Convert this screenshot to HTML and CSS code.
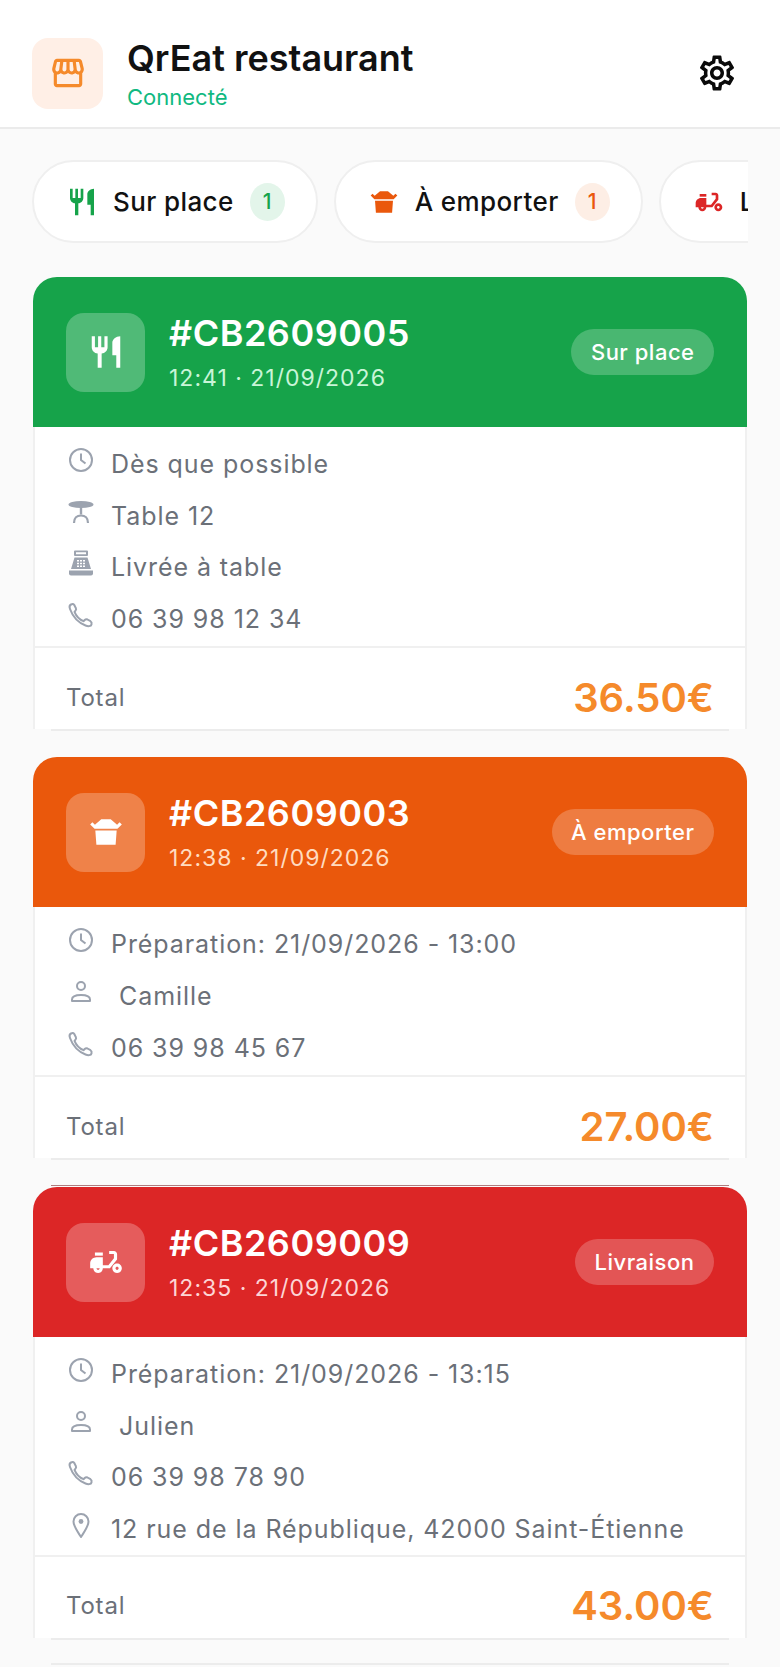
FILE: index.html
```html
<!DOCTYPE html>
<html lang="fr">
<head>
	<meta charset="UTF-8">
	<meta name="viewport" content="width=device-width, initial-scale=1.0">
	<title>QrEat restaurant</title>
	<link rel="stylesheet" href="styles.css">
</head>
<body>

	<svg class="defs" aria-hidden="true">
		<symbol id="i-fork" viewBox="0 0 24 24"><path d="M11 9H9V2H7v7H5V2H3v7c0 2.12 1.66 3.84 3.75 3.97V22h2.5v-9.03C11.34 12.84 13 11.12 13 9V2h-2v7zm5-3v8h2.5v8H21V2c-2.76 0-5 2.24-5 4z"/></symbol>
		<symbol id="i-box" viewBox="0 0 24 24"><path d="M5.26 11h13.48l-.67 9H5.93l-.67-9zm3.76-7h5.95L19 7.38l1.59-1.59L22 7.21 19.21 10H4.79L2 7.21 3.41 5.8 5 7.38 9.02 4z"/></symbol>
		<symbol id="i-moped" viewBox="0 0 24 24"><path d="M19 7c0-1.1-.9-2-2-2h-3v2h3v2.65L13.52 14H10V9H6c-2.21 0-4 1.79-4 4v3h2c0 1.66 1.34 3 3 3s3-1.34 3-3h4.48L19 10.35V7zM7 17c-.55 0-1-.45-1-1h2c0 .55-.45 1-1 1z"/><path d="M5 6h5v2H5z"/><path d="M19 13c-1.66 0-3 1.34-3 3s1.34 3 3 3 3-1.34 3-3-1.34-3-3-3zm0 4c-.55 0-1-.45-1-1s.45-1 1-1 1 .45 1 1-.45 1-1 1z"/></symbol>
		<symbol id="i-clock" viewBox="0 0 28 28"><circle cx="14" cy="14" r="11" fill="none" stroke="currentColor" stroke-width="2"/><path d="M14 7.5V14l4.5 3.5" fill="none" stroke="currentColor" stroke-width="2"/></symbol>
		<symbol id="i-table" viewBox="0 0 28 28"><ellipse cx="14" cy="6.5" rx="12.5" ry="3.6"/><path d="M12.8 9h2.4v7.5h-2.4z"/><path d="M7 25c0-5 3-7.5 7-7.5s7 2.500 7 7.500" fill="none" stroke="currentColor" stroke-width="2.200"/></symbol>
		<symbol id="i-till" viewBox="0 0 28 28"><path d="M8 1.500h12a1 1 0 0 1 1 1v3.500a1 1 0 0 1-1 1H8a1 1 0 0 1-1-1V2.500a1 1 0 0 1 1-1zm1 1.800v2h10v-2z" fill-rule="evenodd"/><path d="M7.500 8.500h13l3.500 11.500H4zM10 11v1.500h2V11zm3 0v1.500h2V11zm3 0v1.500h2V11zm-6 2.700v1.500h2v-1.500zm3 0v1.500h2v-1.500zm3 0v1.500h2v-1.500zm-6 2.700v1.500h2v-1.500zm3 0v1.500h2v-1.500zm3 0v1.500h2v-1.500z" fill-rule="evenodd"/><path d="M2 21.500h24v3a2 2 0 0 1-2 2H4a2 2 0 0 1-2-2z"/></symbol>
		<symbol id="i-phone" viewBox="0 0 28 28"><path d="M4 3.500c-1.500.8-1.800 2.500-1 4.500 2.500 7 8 13.500 15.500 16.500 2.500 1 5.500 1 6-1 .4-1.500 0-2.600-1-3.300l-3-1.700c-1-.5-2-.3-2.800.5l-1.200 1.200C12.500 18.500 9 14.500 7.500 10.800l1-1.100c.7-.8.800-1.700.3-2.600L7.300 4c-.7-1-2-1.200-3.300-.5z" fill="none" stroke="currentColor" stroke-width="2" stroke-linejoin="round"/></symbol>
		<symbol id="i-user" viewBox="0 0 28 28"><circle cx="14" cy="8" r="4" fill="none" stroke="currentColor" stroke-width="2"/><path d="M5 23v-1.500c0-3 4-4.500 9-4.500s9 1.500 9 4.500V23z" fill="none" stroke="currentColor" stroke-width="2" stroke-linejoin="round"/></symbol>
		<symbol id="i-pin" viewBox="0 0 28 28"><path d="M14 26C9.500 19 6.500 15 6.500 10.500a7.500 7.500 0 0 1 15 0C21.500 15 18.500 19 14 26z" fill="none" stroke="currentColor" stroke-width="2" stroke-linejoin="round"/><circle cx="14" cy="10.500" r="2.400"/></symbol>
	</svg>

	<header class="topbar">
		<div class="logo">
			<svg class="logo-icon" viewBox="0 0 24 24"><path d="M21.900 8.890l-1.050-4.370c-.22-.9-1-1.520-1.910-1.520H5.050c-.9 0-1.690.63-1.900 1.520L2.100 8.890c-.24 1.020-.02 2.060.62 2.880.08.11.19.19.28.29V19c0 1.100.9 2 2 2h14c1.100 0 2-.9 2-2v-6.940c.09-.09.2-.18.28-.28.64-.82.87-1.870.62-2.890zm-2.990-3.900l1.050 4.370c.1.420.01.84-.25 1.170-.14.18-.44.47-.94.47-.61 0-1.140-.49-1.210-1.140L16.980 5l1.930-.01zM13 5h1.960l.54 4.520c.05.39-.07.78-.33 1.070-.22.26-.54.41-.95.41-.67 0-1.220-.59-1.220-1.310V5zM8.490 9.520L9.040 5H11v4.690c0 .72-.55 1.310-1.290 1.310-.34 0-.65-.15-.89-.41-.25-.29-.37-.68-.33-1.070zm-4.450-.16L5.050 5h1.970l-.58 4.860c-.08.65-.6 1.140-1.210 1.140-.49 0-.8-.29-.93-.47-.27-.32-.36-.75-.26-1.170zM5 19v-6.030c.08.01.15.03.23.03.87 0 1.660-.36 2.240-.95.6.6 1.400.95 2.310.95.87 0 1.650-.36 2.230-.93.59.57 1.390.93 2.290.93.84 0 1.640-.35 2.240-.95.58.59 1.370.95 2.240.95.08 0 .15-.02.23-.03V19H5z"/></svg>
		</div>
		<div class="brand">
			<div class="brand-name">QrEat restaurant</div>
			<div class="brand-status">Connecté</div>
		</div>
		<svg class="gear" viewBox="0 0 24 24"><path d="M19.430 12.980c.04-.32.07-.64.07-.98 0-.34-.03-.66-.07-.98l2.110-1.650c.19-.15.24-.42.12-.64l-2-3.460c-.09-.16-.26-.25-.44-.25-.06 0-.12.01-.17.03l-2.490 1c-.52-.4-1.080-.73-1.690-.98l-.38-2.650C14.460 2.180 14.250 2 14 2h-4c-.25 0-.46.18-.49.42l-.38 2.650c-.61.25-1.170.59-1.690.98l-2.490-1c-.06-.02-.12-.03-.18-.03-.17 0-.34.09-.43.25l-2 3.460c-.13.22-.07.49.12.64l2.110 1.650c-.04.32-.07.65-.07.98 0 .33.03.66.07.98l-2.110 1.650c-.19.15-.24.42-.12.64l2 3.460c.09.16.26.25.44.25.06 0 .12-.01.17-.03l2.490-1c.52.4 1.080.73 1.690.98l.38 2.650c.03.24.24.42.49.42h4c.25 0 .46-.18.49-.42l.38-2.650c.61-.25 1.170-.59 1.690-.98l2.490 1c.06.02.12.03.18.03.17 0 .34-.09.43-.25l2-3.460c.12-.22.07-.49-.12-.64l-2.110-1.650zm-1.980-1.710c.04.31.05.52.05.73 0 .21-.02.43-.05.73l-.14 1.130.89.7 1.080.84-.7 1.210-1.270-.51-1.040-.42-.9.68c-.43.32-.84.56-1.250.73l-1.060.43-.16 1.130-.2 1.350h-1.400l-.19-1.350-.16-1.130-1.060-.43c-.43-.18-.83-.41-1.230-.71l-.91-.7-1.060.43-1.270.51-.7-1.210 1.080-.84.89-.7-.14-1.130c-.03-.31-.05-.54-.05-.74s.02-.43.05-.73l.14-1.130-.89-.7-1.080-.84.7-1.210 1.270.51 1.040.42.9-.68c.43-.32.84-.56 1.250-.73l1.060-.43.16-1.130.2-1.350h1.390l.19 1.350.16 1.130 1.060.43c.43.18.83.41 1.230.71l.91.7 1.060-.43 1.270-.51.7 1.210-1.070.85-.89.7.14 1.130zM12 8c-2.210 0-4 1.790-4 4s1.790 4 4 4 4-1.790 4-4-1.790-4-4-4zm0 6c-1.100 0-2-.9-2-2s.9-2 2-2 2 .9 2 2-.9 2-2 2z"/></svg>
	</header>

	<nav class="tabs">
		<div class="tab tab-green">
			<svg class="tab-icon"><use href="#i-fork"/></svg>
			<span class="tab-label">Sur place</span>
			<span class="tab-count">1</span>
		</div>
		<div class="tab tab-orange">
			<svg class="tab-icon"><use href="#i-box"/></svg>
			<span class="tab-label">À emporter</span>
			<span class="tab-count">1</span>
		</div>
		<div class="tab tab-red">
			<svg class="tab-icon"><use href="#i-moped"/></svg>
			<span class="tab-label">Livraison</span>
			<span class="tab-count">1</span>
		</div>
	</nav>

	<main class="orders">

		<article class="card card-green">
			<div class="card-head">
				<div class="type-icon"><svg><use href="#i-fork"/></svg></div>
				<div class="card-title">
					<div class="order-no">#CB2609005</div>
					<div class="order-time">12:41 · 21/09/2026</div>
				</div>
				<span class="type-badge">Sur place</span>
			</div>
			<div class="card-body">
				<div class="row"><svg class="row-icon"><use href="#i-clock"/></svg><span>Dès que possible</span></div>
				<div class="row"><svg class="row-icon"><use href="#i-table"/></svg><span>Table 12</span></div>
				<div class="row"><svg class="row-icon"><use href="#i-till"/></svg><span>Livrée à table</span></div>
				<div class="row"><svg class="row-icon"><use href="#i-phone"/></svg><span>06 39 98 12 34</span></div>
			</div>
			<div class="card-foot">
				<span class="total-label">Total</span>
				<span class="total-value">36.50€</span>
			</div>
			<div class="card-edge"></div>
		</article>

		<article class="card card-orange">
			<div class="card-head">
				<div class="type-icon"><svg><use href="#i-box"/></svg></div>
				<div class="card-title">
					<div class="order-no">#CB2609003</div>
					<div class="order-time">12:38 · 21/09/2026</div>
				</div>
				<span class="type-badge">À emporter</span>
			</div>
			<div class="card-body">
				<div class="row"><svg class="row-icon"><use href="#i-clock"/></svg><span>Préparation: 21/09/2026 - 13:00</span></div>
				<div class="row"><svg class="row-icon"><use href="#i-user"/></svg><span class="name">Camille</span></div>
				<div class="row"><svg class="row-icon"><use href="#i-phone"/></svg><span>06 39 98 45 67</span></div>
			</div>
			<div class="card-foot">
				<span class="total-label">Total</span>
				<span class="total-value">27.00€</span>
			</div>
			<div class="card-edge"></div>
		</article>

		<article class="card card-red">
			<div class="card-edge edge-dark"></div>
			<div class="card-head">
				<div class="type-icon"><svg><use href="#i-moped"/></svg></div>
				<div class="card-title">
					<div class="order-no">#CB2609009</div>
					<div class="order-time">12:35 · 21/09/2026</div>
				</div>
				<span class="type-badge">Livraison</span>
			</div>
			<div class="card-body">
				<div class="row"><svg class="row-icon"><use href="#i-clock"/></svg><span>Préparation: 21/09/2026 - 13:15</span></div>
				<div class="row"><svg class="row-icon"><use href="#i-user"/></svg><span class="name">Julien</span></div>
				<div class="row"><svg class="row-icon"><use href="#i-phone"/></svg><span>06 39 98 78 90</span></div>
				<div class="row"><svg class="row-icon"><use href="#i-pin"/></svg><span>12 rue de la République, 42000 Saint-Étienne</span></div>
			</div>
			<div class="card-foot">
				<span class="total-label">Total</span>
				<span class="total-value">43.00€</span>
			</div>
			<div class="card-edge"></div>
		</article>

		<div class="card-edge next-card"></div>
	</main>

</body>
</html>
```

FILE: styles.css
```css
html, body {
	height: 1667px;
	overflow: hidden;
}
body {
	margin: 0;
	font-family: Inter, 'Noto Sans', sans-serif;
	background-color: #fafafa;
	color: #111111;
}
svg {
	fill: currentColor;
	flex: none;
}
.defs {
	display: none;
}

/* top bar */
.topbar {
	display: flex;
	align-items: center;
	height: 74px;
	padding: 36px 42px 17px 32px;
	background-color: white;
	border-bottom: 2px solid #ebebeb;
}
.logo {
	width: 71px;
	height: 71px;
	border-radius: 16px;
	background-color: #ffefe6;
	display: flex;
	align-items: center;
	justify-content: center;
	color: #f58a2b;
}
.logo-icon {
	width: 38px;
	height: 38px;
}
.brand {
	flex: 1;
	margin-left: 24px;
}
.brand-name {
	font-size: 36px;
	font-weight: 600;
	line-height: 44px;
}
.brand-status {
	font-size: 22px;
	line-height: 30px;
	margin: 2px 0 -2px;
	color: #10b981;
}
.gear {
	width: 42px;
	height: 42px;
	color: #0a0a0a;
}

/* filter tabs */
.tabs {
	display: flex;
	gap: 16px;
	margin: 31px 32px 0 32px;
	overflow: hidden;
}
.tab {
	flex: none;
	display: flex;
	align-items: center;
	height: 83px;
	padding: 0 31px 0 33px;
	box-sizing: border-box;
	background-color: white;
	border: 2px solid #efefef;
	border-radius: 42px;
}
.tab-icon {
	width: 32px;
	height: 32px;
	margin-left: -1px;
}
.tab-label {
	margin-left: 15px;
	font-size: 26px;
	font-weight: 550;
	letter-spacing: 0.4px;
}
.tab-count {
	margin-left: 16px;
	width: 35px;
	height: 38px;
	border-radius: 50%;
	font-size: 21px;
	font-weight: 500;
	line-height: 38px;
	text-align: center;
}
.tab-green .tab-icon, .tab-green .tab-count { color: #16a34a; }
.tab-orange .tab-icon, .tab-orange .tab-count { color: #ea580c; }
.tab-red .tab-icon, .tab-red .tab-count { color: #dc2626; }
.tab-green .tab-count { background-color: #e3f5ea; }
.tab-orange .tab-count { background-color: #fdeee5; }
.tab-red .tab-count { background-color: #fdeaea; }

/* orders */
.orders {
	display: flex;
	flex-direction: column;
	gap: 26px;
	margin: 34px 33px 0;
}
.card-head {
	display: flex;
	align-items: center;
	height: 150px;
	padding: 0 33px;
	box-sizing: border-box;
	border-radius: 24px 24px 0 0;
	color: white;
}
.card-green .card-head { background-color: #16a34a; }
.card-orange .card-head { background-color: #ea580c; }
.card-red .card-head { background-color: #dc2626; }
.card-red {
	margin-top: -1px;
}
.type-icon {
	width: 79px;
	height: 79px;
	border-radius: 18px;
	background-color: rgba(255, 255, 255, 0.25);
	display: flex;
	align-items: center;
	justify-content: center;
}
.type-icon svg {
	width: 38px;
	height: 38px;
}
.card-title {
	flex: 1;
	margin-left: 24px;
}
.order-no {
	font-size: 36px;
	font-weight: 600;
	line-height: 44px;
	letter-spacing: 0.5px;
}
.order-time {
	font-size: 23px;
	line-height: 34px;
	margin: 6px 0 -2px;
	letter-spacing: 1px;
}
.card-green .order-time { color: #c9f5d8; }
.card-orange .order-time { color: #ffdcc0; }
.card-red .order-time { color: #fdd5d5; }
.type-badge {
	padding: 0 19.5px;
	height: 46px;
	line-height: 46px;
	border-radius: 23px;
	background-color: rgba(255, 255, 255, 0.22);
	font-size: 22px;
	font-weight: 500;
	letter-spacing: 0.5px;
}
.card-body {
	padding: 10px 33px 3px;
	background-color: white;
	border: solid #f0f0f0;
	border-width: 0 2px;
	color: #6b7078;
}
.card-red .card-body {
	padding-bottom: 1px;
}
.row {
	display: flex;
	gap: 16px;
	padding: 10px 0 6px;
	font-size: 25px;
	line-height: 35.6px;
	letter-spacing: 0.93px;
}
.row-icon {
	width: 28px;
	height: 28px;
	margin: -1px 0 0 -1px;
	color: #9ca3af;
}
.name {
	margin-left: 8px;
}
.card-foot {
	display: flex;
	align-items: center;
	justify-content: space-between;
	height: 83px;
	padding: 17px 31px 0;
	box-sizing: border-box;
	background-color: white;
	border: solid #f0f0f0;
	border-width: 2px 2px 0;
}
.total-label {
	font-size: 24px;
	font-weight: 400;
	letter-spacing: 0.8px;
	color: #6b7078;
}
.total-value {
	font-size: 40px;
	font-weight: 600;
	color: #f58a2b;
}
.card-edge {
	height: 2px;
	margin: 0 18px;
	background-color: #ececec;
}
.edge-dark {
	height: 1px;
	margin-bottom: 1px;
	background-color: #b07c7e;
}
.next-card {
	margin-top: -3px;
}
```
